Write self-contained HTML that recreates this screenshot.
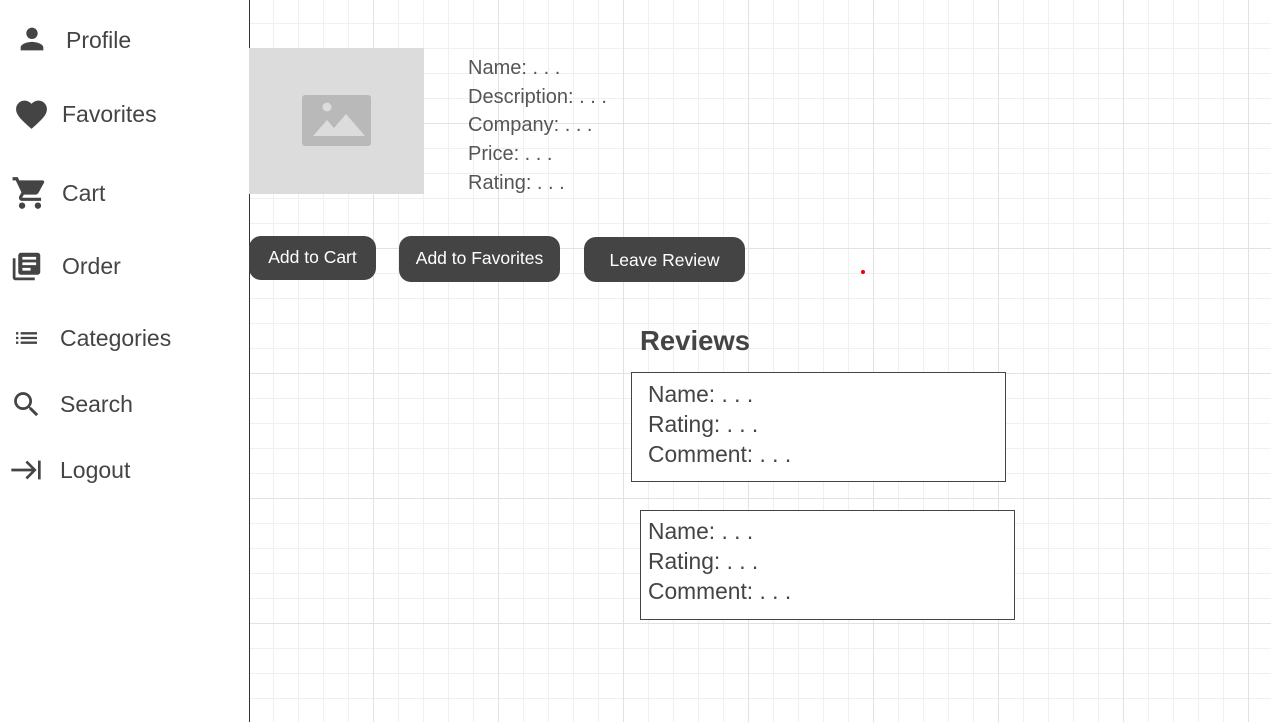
<!DOCTYPE html>
<html><head><style>
body{margin:0;width:1271px;height:722px;overflow:hidden;font-family:"Liberation Sans",sans-serif;color:#444;background:#fff;position:relative}
.grid{position:absolute;left:249px;top:0;width:1022px;height:722px;
background-image:linear-gradient(#e2e2e2 1px,transparent 1px),linear-gradient(90deg,#e2e2e2 1px,transparent 1px),linear-gradient(#f0f0f0 1px,transparent 1px),linear-gradient(90deg,#f0f0f0 1px,transparent 1px);
background-size:125px 125px,125px 125px,25px 25px,25px 25px;background-position:0 -2px,-1px 0,0 -2px,-1px 0}
.side{position:absolute;left:0;top:0;width:249px;height:722px;border-right:1px solid #333;background:#fff}
.it{position:absolute;font-size:23px;color:#444}
.ic{position:absolute}
.a{position:absolute}
.img{left:249px;top:48px;width:175px;height:146px;background:#dcdcdc}
.info{left:468px;top:54px;font-size:20px;line-height:28.7px;color:#555}
.btn{position:absolute;background:#444;color:#fff;font-size:17.5px;border-radius:12px;text-align:center;line-height:44px;height:44px}
.rv{position:absolute;border:1px solid #444;background:#fff;font-size:22.8px;line-height:30px;padding-left:16px;box-sizing:border-box}
</style></head><body>
<div class="grid"></div>
<div class="side">
<svg class="ic" style="left:15px;top:22px" width="34" height="34" viewBox="0 0 24 24"><path fill="#444" d="M12 12c2.2 0 4-1.8 4-4s-1.8-4-4-4-4 1.8-4 4 1.8 4 4 4zm0 2c-2.7 0-8 1.3-8 4v2h16v-2c0-2.7-5.3-4-8-4z"/></svg>
<div class="it" style="left:66px;top:27px">Profile</div>
<svg class="ic" style="left:13px;top:96px" width="37" height="37" viewBox="0 0 24 24"><path fill="#444" d="M12 21.35l-1.45-1.32C5.4 15.36 2 12.28 2 8.5 2 5.42 4.42 3 7.5 3c1.74 0 3.41.81 4.5 2.09C13.09 3.81 14.76 3 16.5 3 19.58 3 22 5.42 22 8.5c0 3.78-3.4 6.86-8.55 11.54L12 21.35z"/></svg>
<div class="it" style="left:62px;top:101px">Favorites</div>
<svg class="ic" style="left:11px;top:174px" width="38" height="38" viewBox="0 0 24 24"><path fill="#444" d="M7 18c-1.1 0-2 .9-2 2s.9 2 2 2 2-.9 2-2-.9-2-2-2zM1 2v2h2l3.6 7.59-1.350 2.45c-.16.28-.25.61-.25.96 0 1.1.9 2 2 2h12v-2H7.42c-.14 0-.25-.11-.25-.25l.03-.12.9-1.630h7.45c.75 0 1.41-.41 1.75-1.03l3.58-6.49A1 1 0 0 0 20 4H5.21l-.94-2H1zm16 16c-1.1 0-2 .9-2 2s.9 2 2 2 2-.9 2-2-.9-2-2-2z"/></svg>
<div class="it" style="left:62px;top:180px">Cart</div>
<svg class="ic" style="left:10px;top:250px" width="33" height="33" viewBox="0 0 24 24"><path fill="#444" d="M4 6H2v14c0 1.1.9 2 2 2h14v-2H4V6zm16-4H8c-1.1 0-2 .9-2 2v12c0 1.1.9 2 2 2h12c1.1 0 2-.9 2-2V4c0-1.1-.9-2-2-2zm-1 9H9V9h10v2zm-4 4H9v-2h6v2zm4-8H9V5h10v2z"/></svg>
<div class="it" style="left:62px;top:253px">Order</div>
<svg class="ic" style="left:11px;top:324px" width="31" height="28" viewBox="0 0 24 24"><path fill="#444" d="M3 13h2v-2H3v2zm0 4h2v-2H3v2zm0-8h2V7H3v2zm4 4h14v-2H7v2zm0 4h14v-2H7v2zM7 7v2h14V7H7z"/></svg>
<div class="it" style="left:60px;top:325px">Categories</div>
<svg class="ic" style="left:10px;top:388px" width="33" height="33" viewBox="0 0 24 24"><path fill="#444" d="M15.5 14h-.79l-.28-.27A6.47 6.47 0 0 0 16 9.5 6.5 6.5 0 1 0 9.5 16c1.61 0 3.09-.59 4.23-1.57l.27.28v.79l5 4.99L20.49 19l-4.99-5zm-6 0C7.01 14 5 11.990 5 9.5S7.01 5 9.5 5 14 7.01 14 9.5 11.99 14 9.5 14z"/></svg>
<div class="it" style="left:60px;top:391px">Search</div>
<svg class="ic" style="left:10px;top:454px" width="32" height="32" viewBox="0 0 24 24"><path fill="#444" d="M1 11h15.2l-4.6-4.6L13 5l7 7-7 7-1.4-1.4 4.6-4.6H1v-2zm20-6h2v14h-2V5z"/></svg>
<div class="it" style="left:60px;top:457px">Logout</div>
</div>
<div class="a img"><svg style="position:absolute;left:53px;top:47px" width="69" height="51" viewBox="0 0 69 51"><rect width="69" height="51" rx="3" fill="#b9b9b9"/><circle cx="25" cy="12" r="4.5" fill="#dcdcdc"/><path d="M11 41l14-16 7 8 12-14 19 22z" fill="#dcdcdc"/></svg></div>
<div class="a info">Name: . . .<br>Description: . . .<br>Company: . . .<br>Price: . . .<br>Rating: . . .</div>
<div class="btn" style="left:249px;top:236px;width:127px;line-height:42px">Add to Cart</div>
<div class="btn" style="left:399px;top:236px;width:161px;height:46px">Add to Favorites</div>
<div class="btn" style="left:584px;top:237px;width:161px;height:45px;line-height:46px">Leave Review</div>
<div class="a" style="left:861px;top:270px;width:4px;height:4px;border-radius:2px;background:#e00"></div>
<div class="a" style="left:640px;top:325px;font-size:27.5px;font-weight:bold">Reviews</div>
<div class="rv" style="left:631px;top:372px;width:375px;height:110px;padding-top:6px">Name: . . .<br>Rating: . . .<br>Comment: . . .</div>
<div class="rv" style="left:640px;top:510px;width:375px;height:110px;padding-left:7px;padding-top:5px">Name: . . .<br>Rating: . . .<br>Comment: . . .</div>
</body></html>
